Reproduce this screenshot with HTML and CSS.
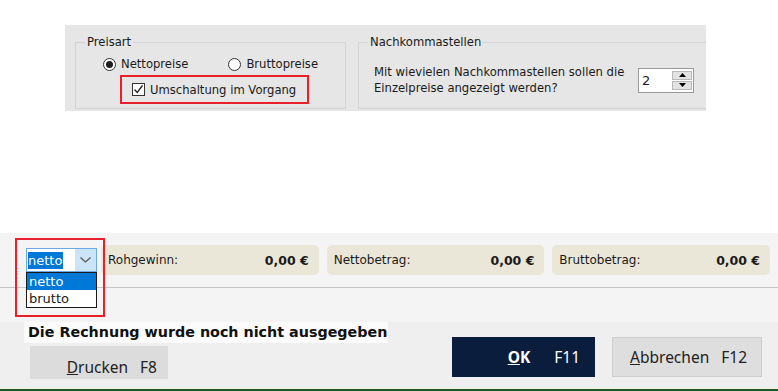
FILE: index.html
```html
<!DOCTYPE html>
<html lang="de">

<head>
    <meta charset="UTF-8">
    <title>Rechnung</title>
    <link rel="stylesheet" href="styles.css">
</head>

<body>
    <div class="settings">
        <div class="panel">
            <fieldset class="group group-price">
                <legend>Preisart</legend>
                <div class="radios">
                    <label class="radio"><span class="radio-dot checked"></span>Nettopreise</label>
                    <label class="radio"><span class="radio-dot"></span>Bruttopreise</label>
                </div>
                <div class="mark mark-check">
                    <label class="check">
                        <span class="check-box">
                            <svg width="11" height="11" viewBox="0 0 11 11"><path d="M1.5 5.5 L4.2 8.5 L9.5 1.5" fill="none" stroke="#222" stroke-width="1.3"/></svg>
                        </span>
                        Umschaltung im Vorgang
                    </label>
                </div>
            </fieldset>
            <fieldset class="group group-decimals">
                <legend>Nachkommastellen</legend>
                <div class="decimals-row">
                    <p>Mit wievielen Nachkommastellen sollen die<br>Einzelpreise angezeigt werden?</p>
                    <div class="spin">
                        <span class="spin-value">2</span>
                        <div class="spin-buttons">
                            <span class="spin-btn"><svg width="7" height="4" viewBox="0 0 7 4"><path d="M0 4 L3.5 0 L7 4Z" fill="#000"/></svg></span>
                            <span class="spin-btn"><svg width="7" height="4" viewBox="0 0 7 4"><path d="M0 0 L3.5 4 L7 0Z" fill="#000"/></svg></span>
                        </div>
                    </div>
                </div>
            </fieldset>
        </div>
    </div>

    <div class="bottom">
        <div class="summary-bar">
            <div class="combo-cell">
                <div class="combo">
                    <span class="combo-text">netto</span>
                    <span class="combo-arrow"><svg width="11" height="6" viewBox="0 0 11 6"><path d="M0.5 0.5 L5.5 5 L10.5 0.5" fill="none" stroke="#555" stroke-width="1.2"/></svg></span>
                    <ul class="combo-list">
                        <li class="selected">netto</li>
                        <li>brutto</li>
                    </ul>
                </div>
                <div class="mark mark-combo"></div>
            </div>
            <div class="amounts">
                <div class="amount-box"><span>Rohgewinn:</span><b>0,00 €</b></div>
                <div class="amount-box"><span>Nettobetrag:</span><b>0,00 €</b></div>
                <div class="amount-box"><span>Bruttobetrag:</span><b>0,00 €</b></div>
            </div>
        </div>

        <div class="actions">
            <div class="actions-left">
                <div class="status">Die Rechnung wurde noch nicht ausgegeben</div>
                <button class="btn btn-print"><span><u>D</u>rucken</span><span>F8</span></button>
            </div>
            <div class="actions-right">
                <button class="btn btn-ok"><span class="ok-label"><u>O</u>K</span><span>F11</span></button>
                <button class="btn btn-cancel"><span><u>A</u>bbrechen</span><span>F12</span></button>
            </div>
        </div>
    </div>
</body>

</html>
```

FILE: styles.css
```css
html, body {
    margin: 0;
    height: 100%;
}

body {
    background: #fff;
    font-family: "DejaVu Sans", sans-serif;
    font-size: 12px;
    color: #1a1a1a;
    display: flex;
    flex-direction: column;
}

/* top settings panel */
.settings {
    padding: 25px 0 122px 65px;
}

.panel {
    width: 641px;
    height: 86px;
    box-sizing: border-box;
    background: #e6e6e6;
    padding: 10px 0 0 10px;
    display: flex;
    gap: 12px;
    font-size: 11.6px;
}

.group {
    margin: 0;
    padding: 0;
    border: 1px solid #d3d3d3;
    height: 74px;
    box-sizing: border-box;
    min-width: 0;
}

.group legend {
    padding: 0 2px;
    margin-left: 9px;
    line-height: 14px;
}

.group-price {
    width: 271px;
}

.group-decimals {
    flex: 1;
    border-right: none;
}

.radios {
    display: flex;
    gap: 40px;
    margin: 7px 0 0 27px;
    height: 16px;
    align-items: center;
}

.radio {
    display: flex;
    align-items: center;
    gap: 5px;
}

.radio-dot {
    width: 11px;
    height: 11px;
    border: 1px solid #333;
    border-radius: 50%;
    background: #fff;
    display: flex;
    align-items: center;
    justify-content: center;
}

.radio-dot.checked::after {
    content: "";
    width: 7px;
    height: 7px;
    border-radius: 50%;
    background: #1e1e1e;
}

.mark {
    border: 2px solid #e8202a;
    box-sizing: border-box;
}

.mark-check {
    width: 189px;
    height: 29px;
    margin: 3px 0 0 44px;
    display: flex;
    align-items: center;
    padding-left: 10px;
}

.check {
    display: flex;
    align-items: center;
    gap: 5px;
}

.check-box {
    width: 11px;
    height: 11px;
    border: 1px solid #333;
    background: #fff;
    display: flex;
}

.decimals-row {
    display: flex;
    align-items: center;
    margin: 15px 0 0 15px;
}

.decimals-row p {
    margin: 0;
    line-height: 16px;
    width: 264px;
}

.spin {
    width: 56px;
    height: 25px;
    box-sizing: border-box;
    border: 1px solid #9a9a9a;
    background: #fff;
    display: flex;
    justify-content: space-between;
    padding: 2px 1px 2px 3px;
}

.spin-value {
    font-size: 13px;
    line-height: 19px;
}

.spin-buttons {
    display: flex;
    flex-direction: column;
    gap: 1px;
}

.spin-btn {
    width: 20px;
    height: 9px;
    box-sizing: border-box;
    border: 1px solid #b8b8b8;
    background: #e3e3e3;
    display: flex;
    align-items: center;
    justify-content: center;
}

/* bottom area */
.bottom {
    flex: 1;
    background: #f4f4f4;
    display: flex;
    flex-direction: column;
}

.summary-bar {
    display: flex;
    padding: 12px 8px 12px 15px;
    border-bottom: 1px solid #c4c4c4;
    height: 30px;
}

.combo-cell {
    position: relative;
    width: 86px;
    flex-shrink: 0;
}

.combo {
    position: relative;
    margin: 3px 0 0 11px;
    width: 71px;
    height: 24px;
    box-sizing: border-box;
    border: 1px solid #6aa9e4;
    background: #fff;
    display: flex;
    align-items: center;
    justify-content: space-between;
    padding-left: 1px;
}

.combo-text {
    background: #0078d7;
    color: #fff;
    font-size: 13px;
    line-height: 17px;
    padding-right: 1px;
}

.combo-arrow {
    width: 21px;
    height: 22px;
    background: #cce4f7;
    display: flex;
    align-items: center;
    justify-content: center;
}

.combo-list {
    position: absolute;
    top: 23px;
    left: -1px;
    width: 71px;
    margin: 0;
    padding: 0;
    list-style: none;
    border: 1px solid #1a1a1a;
    background: #fff;
    box-sizing: border-box;
    z-index: 2;
}

.combo-list li {
    font-size: 13px;
    line-height: 17px;
    padding-left: 2px;
}

.combo-list li.selected {
    background: #0078d7;
    color: #fff;
}

.mark-combo {
    position: absolute;
    top: -7px;
    left: 0;
    width: 90px;
    height: 79px;
    z-index: 3;
}

.amounts {
    flex: 1;
    display: flex;
    gap: 8px;
}

.amount-box {
    flex: 1;
    background: #ebe7d8;
    border-radius: 5px;
    display: flex;
    align-items: center;
    justify-content: space-between;
    padding: 0 10px 0 7px;
}

.amount-box b {
    font-weight: bold;
    font-size: 12.5px;
}

/* buttons */
.actions {
    margin-top: 34px;
    flex: 1;
    background: #efefef;
    border-bottom: 2px solid #1d5a1f;
    display: flex;
    justify-content: space-between;
    padding: 0 16px 0 24px;
}

.status {
    background: #fbfbfb;
    font-weight: bold;
    font-size: 14.3px;
    line-height: 21px;
    padding: 0 1px 0 4px;
    color: #111;
}

.btn {
    border: none;
    font-family: "Noto Sans", sans-serif;
    font-size: 15.5px;
    color: #222;
    display: flex;
    align-items: center;
    justify-content: flex-end;
    gap: 12px;
    padding: 0 13px 0 0;
    box-sizing: border-box;
}

.btn-print {
    margin: 3px 0 0 6px;
    width: 138px;
    height: 33px;
    background: #dcdcdc;
    padding-top: 8px;
    padding-right: 11px;
}

.actions-right {
    display: flex;
    gap: 17px;
    padding-top: 15px;
}

.btn-ok {
    width: 143px;
    height: 40px;
    background: #0b1d3d;
    color: #fff;
    gap: 24px;
    padding-right: 15px;
}

.ok-label {
    font-weight: bold;
}

.btn-cancel {
    width: 150px;
    height: 40px;
    background: #dedede;
    border: 1px solid #cdcdcd;
    padding-right: 14px;
}
```
